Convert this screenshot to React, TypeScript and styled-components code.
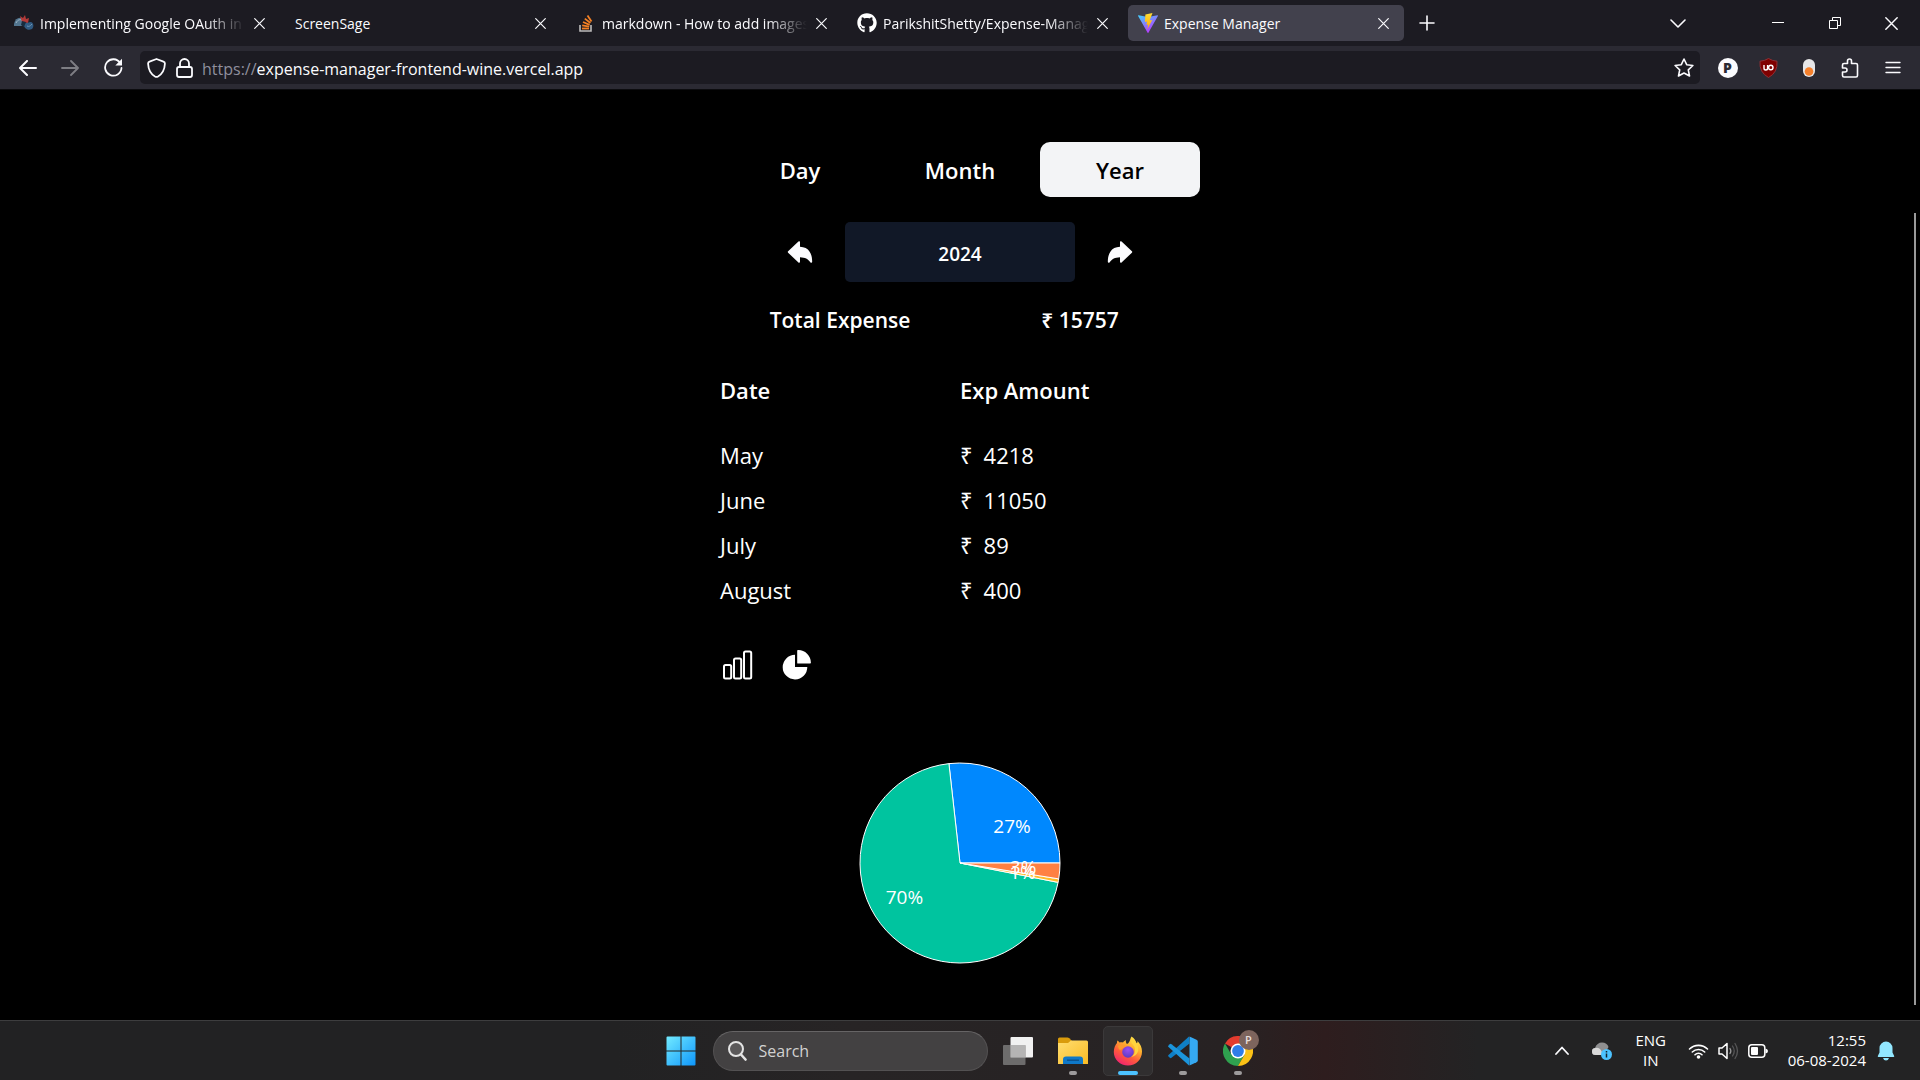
import React from "react";
import styled, { createGlobalStyle } from "styled-components";
import { IoArrowUndo, IoArrowRedo } from "react-icons/io5";
import { FaGithub } from "react-icons/fa";

const GlobalStyle = createGlobalStyle`
  *, *::before, *::after { box-sizing: border-box; }
  body { margin: 0; background: #000; }
  body, button, input { font-family: "Open Sans", "Noto Sans", sans-serif; }
  button { border: 0; padding: 0; background: none; color: inherit; cursor: pointer; }
  svg { display: block; flex: none; }
`;

const Desktop = styled.div`
  display: flex;
  flex-direction: column;
  min-height: 100vh;
  color: #fff;
`;

/* ---------- Browser chrome ---------- */

const TabStrip = styled.div`
  display: flex;
  align-items: center;
  height: 46px;
  padding-left: 4px;
  background: #1c1b22;
`;

const Tab = styled.div<{ $active?: boolean }>`
  display: flex;
  align-items: center;
  gap: 6px;
  flex: 0 1 276px;
  min-width: 0;
  height: 36px;
  margin-right: 5px;
  padding: 0 13px 0 10px;
  border-radius: 5px;
  background: ${(p) => (p.$active ? "#42414d" : "transparent")};
`;

const TabLabel = styled.span<{ $fade?: boolean }>`
  flex: 1;
  min-width: 0;
  overflow: hidden;
  padding-top: 2px;
  white-space: nowrap;
  font-size: 14px;
  line-height: 20px;
  color: #fbfbfe;
  mask-image: ${(p) =>
    p.$fade ? "linear-gradient(to left, transparent, #000 40px)" : "none"};
`;

const IconButton = styled.button<{ $w?: number; $dim?: boolean }>`
  display: flex;
  align-items: center;
  justify-content: center;
  flex: none;
  width: ${(p) => p.$w ?? 24}px;
  height: 36px;
  color: #fbfbfe;
  opacity: ${(p) => (p.$dim ? 0.4 : 1)};
`;

const WindowControls = styled.div`
  display: flex;
  align-items: center;
  margin-left: auto;
`;

const TabsMenu = styled.div`
  margin-right: 42px;
`;

const Toolbar = styled.div`
  display: flex;
  align-items: center;
  height: 43px;
  padding: 0 6px 0 7px;
  background: #2b2a33;
`;

const NavGroup = styled.div`
  display: flex;
  width: 133px;
`;

const UrlBar = styled.div`
  display: flex;
  align-items: center;
  flex: 1;
  height: 33px;
  padding: 0 4px 0 2px;
  border-radius: 5px;
  background: #1c1b22;
`;

const UrlText = styled.a`
  flex: 1;
  margin-left: 4px;
  padding-top: 2px;
  color: #fbfbfe;
  font-size: 16px;
  line-height: 24px;
  text-decoration: none;
  span { color: #8f8f9d; }
`;

const Extensions = styled.div`
  display: flex;
  margin-left: 7px;
`;

const ProfileBadge = styled.span`
  display: grid;
  place-items: center;
  width: 20px;
  height: 20px;
  border-radius: 50%;
  background: #fbfbfe;
  color: #2b2a33;
  font-size: 14px;
  font-weight: 800;
  line-height: 20px;
`;

/* ---------- Expense page ---------- */

const Page = styled.main`
  position: relative;
  flex: 1;
  border-top: 1px solid #0c0c0f;
  padding: 52px 16px 0;
  background: #000;
`;

const ScrollThumb = styled.div`
  position: absolute;
  top: 123px;
  right: 4px;
  bottom: 15px;
  width: 2px;
  background: #9a9a9a;
`;

const Content = styled.div`
  max-width: 480px;
  margin: 0 auto;
`;

const PeriodTabs = styled.div`
  display: grid;
  grid-template-columns: repeat(3, 1fr);
`;

const PeriodButton = styled.button<{ $selected?: boolean }>`
  height: 55px;
  border-radius: 10px;
  background: ${(p) => (p.$selected ? "#f3f4f6" : "transparent")};
  color: ${(p) => (p.$selected ? "#000" : "#fff")};
  font-size: 22px;
  font-weight: 600;
  line-height: 32px;
`;

const YearPicker = styled.div`
  display: flex;
  align-items: center;
  justify-content: center;
  gap: 20px;
  margin-top: 25px;
`;

const YearValue = styled.div`
  width: 230px;
  padding: 18px 0 14px;
  border-radius: 5px;
  background: #111827;
  font-size: 19px;
  font-weight: 600;
  line-height: 28px;
  text-align: center;
`;

const TotalRow = styled.div`
  display: grid;
  grid-template-columns: 1fr 1fr;
  margin-top: 22px;
  font-size: 21px;
  font-weight: 600;
  line-height: 32px;
  text-align: center;
`;

const ExpenseTable = styled.table`
  width: 100%;
  margin-top: 31px;
  border-collapse: collapse;
  table-layout: fixed;
  font-size: 22px;
  text-align: left;
  th {
    height: 65px;
    padding: 7px 0 26px;
    font-weight: 600;
    line-height: 32px;
  }
  td {
    height: 45px;
    padding: 0;
    line-height: 32px;
  }
`;

const Amount = styled.span`
  display: inline-flex;
  gap: 11px;
`;

const ChartSwitch = styled.div`
  display: flex;
  gap: 27px;
  margin-top: 35px;
`;

const ChartArea = styled.div`
  display: flex;
  justify-content: center;
  margin: 79px 0 35px;
`;

const SliceLabel = styled.text`
  fill: #fff;
  font-family: "Open Sans", "Noto Sans", sans-serif;
  font-size: 19px;
`;

/* ---------- Taskbar ---------- */

const Taskbar = styled.footer`
  display: grid;
  grid-template-columns: 1fr auto 1fr;
  align-items: center;
  height: 60px;
  border-top: 1px solid #3d3d3e;
  background: linear-gradient(90deg, #222223 0%, #222223 32%, #272425 44%, #272223 64%, #2e1d1e 69%, #232324 77%, #232324 100%);
`;

const Apps = styled.div`
  grid-column: 2;
  display: flex;
  align-items: center;
  gap: 5px;
  padding-right: 2px;
`;

const AppButton = styled.button<{ $active?: boolean }>`
  position: relative;
  display: grid;
  place-items: center;
  width: 50px;
  height: 50px;
  border: 1px solid ${(p) => (p.$active ? "#3b393a" : "transparent")};
  border-radius: 5px;
  background: ${(p) => (p.$active ? "#302e2f" : "transparent")};
`;

const RunningMark = styled.span<{ $active?: boolean }>`
  position: absolute;
  bottom: 0;
  left: 50%;
  width: ${(p) => (p.$active ? 20 : 8)}px;
  height: 4px;
  margin-left: ${(p) => (p.$active ? -10 : -4)}px;
  border-radius: 2px;
  background: ${(p) => (p.$active ? "#4cc2ff" : "#9d9b9c")};
`;

const UserBadge = styled.span`
  position: absolute;
  top: 3px;
  right: 3px;
  width: 20px;
  height: 20px;
  border-radius: 50%;
  background: #7d645d;
  color: #e8dedb;
  font-size: 11px;
  font-weight: 600;
  line-height: 20px;
`;

const SearchBox = styled.label`
  display: flex;
  align-items: center;
  gap: 12px;
  width: 275px;
  height: 40px;
  margin-left: 2px;
  padding: 0 14px;
  border: 1px solid #535152;
  border-top-color: #666465;
  border-radius: 20px;
  background: #434142;
`;

const SearchInput = styled.input`
  flex: 1;
  min-width: 0;
  border: 0;
  padding: 0;
  outline: 0;
  background: none;
  color: #d2d1d1;
  font-size: 16px;
  line-height: 24px;
  &::placeholder { color: #d2d1d1; opacity: 1; }
`;

const Tray = styled.div`
  display: flex;
  align-items: center;
  justify-content: flex-end;
  padding-right: 25px;
  font-size: 15px;
  line-height: 20px;
`;

const Language = styled.div`
  width: 50px;
  margin: 0 12px 0 4px;
  padding-bottom: 2px;
  text-align: center;
`;

const StatusIcons = styled.div`
  display: flex;
  align-items: center;
  gap: 9px;
  margin-right: 20px;
`;

const Clock = styled.time`
  margin-right: 11px;
  padding-bottom: 2px;
  text-align: right;
`;

const stroke = {
  fill: "none",
  stroke: "currentColor",
  strokeWidth: 1.6,
  strokeLinecap: "round" as const,
  strokeLinejoin: "round" as const,
};

const CloseIcon = ({ size = 11 }: { size?: number }) => (
  <svg width={size} height={size} viewBox="0 0 11 11">
    <path d="M.7.7l9.6 9.6M10.3.7L.7 10.3" {...stroke} strokeWidth={1.2} />
  </svg>
);

const DocsIcon = () => (
  <svg width="20" height="20" viewBox="0 0 20 20">
    <path d="M0 11c1-5 4-7 8-6l3 4-3 4-8 0z" fill="#52758f" />
    <path d="M2 10c2-4 5-4 7-2" stroke="#a3bac8" fill="none" />
    <path d="M6 3l3 2 2-3 1 4 3-1-1 5-6-1z" fill="#b33a38" />
    <path d="M9 10c3 1 5-1 8-1 3 1 3 5 1 7-4 2-8 0-9-6z" fill="#315b82" />
    <path d="M8 8l4 1-2 5-3-2z" fill="#182c3f" />
    <path d="M13 13c2 1 3 0 5-2" stroke="#7096b5" fill="none" />
  </svg>
);

const StackIcon = () => (
  <svg width="20" height="20" viewBox="0 0 20 20">
    <path d="M4 12v6h11v-6" fill="none" stroke="#bcbbbb" strokeWidth="1.6" />
    <g stroke="#f48024" strokeWidth="1.8">
      <path d="M6 15.5h7" />
      <path d="M6.2 12.3l7 1.3" />
      <path d="M7 9l6.6 2.9" />
      <path d="M8.8 5.6l5.6 4.4" />
      <path d="M11.5 2.5l4 6" />
    </g>
  </svg>
);

const ViteIcon = () => (
  <svg width="20" height="20" viewBox="0 0 20 20">
    <defs>
      <linearGradient id="viteBody" x1="0" y1="0" x2=".6" y2="1">
        <stop offset="0" stopColor="#41d1ff" />
        <stop offset="1" stopColor="#bd34fe" />
      </linearGradient>
      <linearGradient id="viteBolt" x1="0" y1="0" x2="0" y2="1">
        <stop offset="0" stopColor="#ffdd35" />
        <stop offset="1" stopColor="#ffa800" />
      </linearGradient>
    </defs>
    <path d="M.4 2.3L10 4l9.6-1.7q.5 0 .3.7L10.4 19.7q-.4.5-.8 0L.1 3q-.2-.6.3-.7z" fill="url(#viteBody)" />
    <path d="M14.5 0L7.4 1.4 6.9 9l2.2-.4-.7 3.3 1.8-.5-1 5 5-9.3-2.6.5z" fill="url(#viteBolt)" />
  </svg>
);

const FolderIcon = () => (
  <svg width="30" height="28" viewBox="0 0 30 28">
    <defs>
      <linearGradient id="folderFront" x1="0" y1="0" x2="1" y2="1">
        <stop offset="0" stopColor="#ffdd70" />
        <stop offset="1" stopColor="#f9bb24" />
      </linearGradient>
    </defs>
    <path d="M0 2q0-1.5 1.5-1.5H9.5q1 0 1.8.8L14 4v7H0z" fill="#d99b0c" />
    <path d="M0 6h10l3-2.500h15.500Q30 3.500 30 5v22H0z" fill="url(#folderFront)" />
    <path d="M5 27v-4.5q0-3 3-3h14q3 0 3 3V27z" fill="#0f78c8" />
    <path d="M9 23.2h12" stroke="#0a4d87" strokeWidth="1.3" />
  </svg>
);

const FirefoxIcon = () => (
  <svg width="30" height="30" viewBox="0 0 30 30">
    <defs>
      <linearGradient id="ffBody" x1=".8" y1="0" x2=".25" y2="1">
        <stop offset="0" stopColor="#fff04d" />
        <stop offset=".35" stopColor="#ffb02e" />
        <stop offset=".65" stopColor="#ff5a3c" />
        <stop offset="1" stopColor="#ee1f74" />
      </linearGradient>
      <radialGradient id="ffCore" cx=".5" cy=".3" r=".7">
        <stop offset="0" stopColor="#9b4df0" />
        <stop offset="1" stopColor="#5e3bc0" />
      </radialGradient>
    </defs>
    <path d="M18.5.5c3 2 4.500 4.500 5 7 1-.5 1-1.500 1-2.500 3 3 4.500 7 4.500 10.500C29 23.500 23 29.500 15 29.500S.800 23.500.800 16C.800 11.500 2.500 9 4 7c0-1 0-1.500.5-2.500C5.500 5 6 6 6.500 6.500 8 6 9 6 10 6.500 11 5 12 4.500 13 4c-.5 1.500 0 3 1 4 2-.5 3-3.500 4.500-7.500z" fill="url(#ffBody)" />
    <circle cx="15" cy="16" r="5.8" fill="url(#ffCore)" />
    <path d="M5 10c3-2 6-2 8 1-2 0-3 .5-4.500 2.500-1.500 1-3 0-3.500-3.500z" fill="#ff9b2c" />
    <path d="M18 1c-1 5 1 6 3 9 2 4 1 9-3 11 7-1 9-8 6-13-1-3-4-4-6-7z" fill="#ffd43d" />
  </svg>
);

const CodeIcon = () => (
  <svg width="30" height="30" viewBox="0 0 30 30">
    <path d="M21.500 7.500L3.500 21.800q-.9.7-1.7 0L.5 20.600q-.8-.8 0-1.600L21 .6z" fill="#0f7fc6" />
    <path d="M21.500 22.500L3.500 8.200q-.9-.7-1.700 0L.5 9.400q-.8.8 0 1.600L21 29.400z" fill="#1b95dc" />
    <path d="M21.500.5l7 3.200q1.300.6 1.300 2v18.600q0 1.400-1.300 2l-7 3.200z" fill="#35a9f2" />
  </svg>
);

const ChromeIcon = () => (
  <svg width="30" height="30" viewBox="0 0 30 30">
    <path d="M15 15L2 7.500A15 15 0 0128 7.500H15z" fill="#e33b2e" />
    <path d="M2 7.500A15 15 0 0015 30l6.500-11.300L8.500 18.700z" fill="#2fa14f" />
    <path d="M28 7.500H15l6.500 11.200L15 30A15 15 0 0028 7.500z" fill="#fbc116" />
    <circle cx="15" cy="15" r="7.5" fill="#fff" />
    <circle cx="15" cy="15" r="5.9" fill="#2f7de9" />
  </svg>
);

const StartIcon = () => (
  <svg width="30" height="30" viewBox="0 0 30 30">
    <defs>
      <linearGradient id="winTile" x1="0" y1="0" x2="30" y2="30" gradientUnits="userSpaceOnUse">
        <stop offset="0" stopColor="#74ecff" />
        <stop offset="1" stopColor="#0c94fb" />
      </linearGradient>
    </defs>
    <path d="M1.500.5H14.500V14.500H.5V1.500q0-1 1-1zM15.500.5H28.500q1 0 1 1V14.500H15.500zM.5 15.500H14.500V29.500H1.500q-1 0-1-1zM15.500 15.500H29.500V28.500q0 1-1 1H15.500z" fill="url(#winTile)" />
  </svg>
);

const TaskViewIcon = () => (
  <svg width="30" height="28" viewBox="0 0 30 28">
    <rect x="7.5" y="0" width="22.5" height="20.5" rx="1" fill="#f1f1f1" />
    <rect x="0" y="8" width="22.5" height="20" rx="1" fill="#7a7979" opacity=".85" />
    <rect x="7.5" y="8" width="15" height="12.5" fill="#b5b4b4" />
  </svg>
);

const BarsIcon = () => (
  <svg width="34" height="30" viewBox="0 0 34 30">
    <g fill="none" stroke="#fff" strokeWidth="2">
      <rect x="4" y="15" width="7.2" height="13.6" rx="1.5" />
      <rect x="14" y="8.5" width="7.2" height="20.1" rx="1.5" />
      <rect x="24" y="1.5" width="7.2" height="27.1" rx="1.5" />
    </g>
  </svg>
);

const PieIcon = () => (
  <svg width="34" height="30" viewBox="0 0 34 30">
    <path d="M14 4.800V17h12.300A12.300 12.300 0 1114 4.800z" fill="#fff" />
    <path d="M16.200.7q0-.7.7-.7A12.800 12.800 0 0129.900 12.800q0 .8-.8.8H16.900q-.7 0-.7-.7z" fill="#fff" />
  </svg>
);

const expenses = [
  { month: "May", amount: 4218, color: "#0088FE" },
  { month: "June", amount: 11050, color: "#00C49F" },
  { month: "July", amount: 89, color: "#FFBB28" },
  { month: "August", amount: 400, color: "#FF8042" },
];
const total = expenses.reduce((sum, e) => sum + e.amount, 0);

const PieChart = () => {
  const c = 101;
  const r = 100;
  const point = (angle: number, radius: number) => [
    c + radius * Math.cos(angle),
    c - radius * Math.sin(angle),
  ];
  let start = 0;
  const slices = expenses.map((e) => {
    const end = start + (e.amount / total) * Math.PI * 2;
    const slice = { ...e, start, end, mid: (start + end) / 2 };
    start = end;
    return slice;
  });
  return (
    <svg width="202" height="202" viewBox="0 0 202 202" role="img" aria-label="Expenses by month">
      {slices.map((s) => {
        const [x1, y1] = point(s.start, r);
        const [x2, y2] = point(s.end, r);
        const large = s.end - s.start > Math.PI ? 1 : 0;
        return (
          <path
            key={s.month}
            d={`M${c} ${c}L${x1} ${y1}A${r} ${r} 0 ${large} 0 ${x2} ${y2}Z`}
            fill={s.color}
            stroke="#fff"
          />
        );
      })}
      {slices.map((s) => {
        const [x, y] = point(s.mid, r / 2);
        return (
          <SliceLabel
            key={s.month}
            x={x}
            y={y}
            textAnchor={x > c ? "start" : "end"}
            dominantBaseline="central"
          >
            {`${((s.amount / total) * 100).toFixed(0)}%`}
          </SliceLabel>
        );
      })}
    </svg>
  );
};

const tabs = [
  { label: "Implementing Google OAuth in Node", icon: <DocsIcon />, fade: true },
  { label: "ScreenSage", icon: null, fade: false },
  { label: "markdown - How to add images to", icon: <StackIcon />, fade: true },
  { label: "ParikshitShetty/Expense-Manager", icon: <FaGithub size={20} />, fade: true },
  { label: "Expense Manager", icon: <ViteIcon />, fade: false },
];

export default function App() {
  return (
    <Desktop>
      <GlobalStyle />
      <TabStrip>
        {tabs.map((tab, i) => (
          <Tab key={tab.label} $active={i === tabs.length - 1}>
            {tab.icon}
            <TabLabel $fade={tab.fade}>{tab.label}</TabLabel>
            <IconButton $w={16} aria-label={`Close ${tab.label}`}>
              <CloseIcon />
            </IconButton>
          </Tab>
        ))}
        <IconButton $w={36} aria-label="New tab">
          <svg width="16" height="16" viewBox="0 0 16 16"><path d="M8 1v14M1 8h14" {...stroke} /></svg>
        </IconButton>
        <WindowControls>
          <TabsMenu>
            <IconButton $w={58} aria-label="List all tabs">
              <svg width="16" height="9" viewBox="0 0 16 9"><path d="M1 1l7 7 7-7" {...stroke} /></svg>
            </IconButton>
          </TabsMenu>
          <IconButton $w={57} aria-label="Minimize">
            <svg width="12" height="12" viewBox="0 0 12 12"><path d="M0 5.500h12" stroke="#fff" /></svg>
          </IconButton>
          <IconButton $w={57} aria-label="Restore">
            <svg width="12" height="12" viewBox="0 0 12 12"><path d="M.5 3.500h8v8h-8zM3.500 3.500v-3h8v8h-3" fill="none" stroke="#fff" /></svg>
          </IconButton>
          <IconButton $w={57} aria-label="Close window"><CloseIcon size={13} /></IconButton>
        </WindowControls>
      </TabStrip>

      <Toolbar>
        <NavGroup>
          <IconButton $w={42} aria-label="Back">
            <svg width="18" height="16" viewBox="0 0 18 16"><path d="M17 8H1.500M8 1L1 8l7 7" {...stroke} strokeWidth={2} /></svg>
          </IconButton>
          <IconButton $w={42} $dim aria-label="Forward">
            <svg width="18" height="16" viewBox="0 0 18 16"><path d="M1 8h15.500M10 1l7 7-7 7" {...stroke} strokeWidth={1.8} /></svg>
          </IconButton>
          <IconButton $w={44} aria-label="Reload">
            <svg width="19" height="19" viewBox="0 0 19 19">
              <path d="M16.200 5A8.200 8.200 0 1017.500 10" {...stroke} strokeWidth={1.8} />
              <path d="M18 .8v6.700h-6.700z" fill="currentColor" />
            </svg>
          </IconButton>
        </NavGroup>
        <UrlBar>
          <IconButton $w={28} aria-label="Tracking protection">
            <svg width="19" height="20" viewBox="0 0 19 20"><path d="M9.500 1l7 2.700q1.500.5 1.400 2-.4 8.800-6.900 12.800-1.500.8-3 0Q1.500 14.500 1.100 5.700 1 4.200 2.500 3.700z" {...stroke} strokeWidth={1.8} /></svg>
          </IconButton>
          <IconButton $w={28} aria-label="Site information">
            <svg width="17" height="20" viewBox="0 0 17 20"><path d="M4 9V5.500a4.500 4.500 0 019 0V9M3 9h11q2 0 2 2v6q0 2-2 2H3q-2 0-2-2v-6q0-2 2-2z" {...stroke} strokeWidth={1.8} /></svg>
          </IconButton>
          <UrlText href="#"><span>https://</span>expense-manager-frontend-wine.vercel.app</UrlText>
          <IconButton aria-label="Bookmark this page">
            <svg width="20" height="20" viewBox="0 0 20 20"><path d="M10 1l2.700 5.700 6.200.8-4.600 4.300 1.200 6.200-5.500-3-5.500 3 1.200-6.200L1.100 7.500l6.200-.8z" {...stroke} /></svg>
          </IconButton>
        </UrlBar>
        <Extensions>
          <IconButton $w={41} aria-label="Profile"><ProfileBadge>P</ProfileBadge></IconButton>
          <IconButton $w={41} aria-label="uBlock Origin">
            <svg width="19" height="20" viewBox="0 0 19 20">
              <path d="M9.500.5q4 2.500 8.500 2.700 1 11.300-8.500 16.300Q0 14.500 1 3.200 5.500 3 9.500.5z" fill="#800000" stroke="#8e3035" />
              <path d="M5 7v3.200a1.800 1.800 0 003.600 0V7" fill="none" stroke="#fff" strokeWidth="1.4" />
              <circle cx="11.8" cy="9.5" r="2.2" fill="none" stroke="#fff" strokeWidth="1.4" />
            </svg>
          </IconButton>
          <IconButton $w={40} aria-label="Toggle extension">
            <svg width="12" height="18" viewBox="0 0 12 18">
              <rect width="12" height="18" rx="6" fill="#e6e6e8" />
              <circle cx="6" cy="12.5" r="4.3" fill="#f5802c" />
            </svg>
          </IconButton>
          <IconButton $w={42} aria-label="Extensions">
            <svg width="18" height="20" viewBox="0 0 18 20"><path d="M6.500 5.500V3a2 2 0 014 0v2.500H15q1.500 0 1.500 1.500v10.500Q16.500 19 15 19H3q-1.500 0-1.500-1.500V14H4a2 2 0 000-4H1.500V7q0-1.500 1.500-1.500z" {...stroke} /></svg>
          </IconButton>
          <IconButton $w={43} aria-label="Open menu">
            <svg width="16" height="13" viewBox="0 0 16 13"><path d="M1 1.500h14M1 6.500h14M1 11.500h14" {...stroke} strokeWidth={1.4} /></svg>
          </IconButton>
        </Extensions>
      </Toolbar>

      <Page>
        <Content>
          <PeriodTabs>
            <PeriodButton>Day</PeriodButton>
            <PeriodButton>Month</PeriodButton>
            <PeriodButton $selected>Year</PeriodButton>
          </PeriodTabs>
          <YearPicker>
            <IconButton $w={50} aria-label="Previous year"><IoArrowUndo size={30} /></IconButton>
            <YearValue>2024</YearValue>
            <IconButton $w={50} aria-label="Next year"><IoArrowRedo size={30} /></IconButton>
          </YearPicker>
          <TotalRow>
            <span>Total Expense</span>
            <span>₹ {total}</span>
          </TotalRow>
          <ExpenseTable>
            <thead>
              <tr><th>Date</th><th>Exp Amount</th></tr>
            </thead>
            <tbody>
              {expenses.map((e) => (
                <tr key={e.month}>
                  <td>{e.month}</td>
                  <td><Amount><span>₹</span><span>{e.amount}</span></Amount></td>
                </tr>
              ))}
            </tbody>
          </ExpenseTable>
          <ChartSwitch>
            <IconButton $w={34} aria-label="Bar chart"><BarsIcon /></IconButton>
            <IconButton $w={34} aria-label="Pie chart"><PieIcon /></IconButton>
          </ChartSwitch>
          <ChartArea><PieChart /></ChartArea>
        </Content>
        <ScrollThumb />
      </Page>

      <Taskbar>
        <Apps>
          <AppButton aria-label="Start"><StartIcon /></AppButton>
          <SearchBox>
            <svg width="19" height="20" viewBox="0 0 19 20">
              <circle cx="8" cy="8" r="7" fill="#5b595a" stroke="#e4e4e4" strokeWidth="2" />
              <path d="M13 13.500l4.500 5" stroke="#e4e4e4" strokeWidth="2.6" strokeLinecap="round" />
            </svg>
            <SearchInput type="text" placeholder="Search" aria-label="Search" />
          </SearchBox>
          <AppButton aria-label="Task view"><TaskViewIcon /></AppButton>
          <AppButton aria-label="File Explorer"><FolderIcon /><RunningMark /></AppButton>
          <AppButton $active aria-label="Firefox"><FirefoxIcon /><RunningMark $active /></AppButton>
          <AppButton aria-label="Visual Studio Code"><CodeIcon /><RunningMark /></AppButton>
          <AppButton aria-label="Chrome"><ChromeIcon /><UserBadge>P</UserBadge><RunningMark /></AppButton>
        </Apps>
        <Tray>
          <IconButton $w={40} aria-label="Show hidden icons">
            <svg width="14" height="9" viewBox="0 0 14 9"><path d="M1 8l6-6.500L13 8" {...stroke} strokeWidth={1.8} /></svg>
          </IconButton>
          <IconButton $w={40} aria-label="OneDrive">
            <svg width="20" height="18" viewBox="0 0 20 18">
              <path d="M3.500 13a3.500 3.500 0 01-.5-7Q5 .5 10 .5q5 0 6.500 4.500L12 13z" fill="#8f8f90" />
              <path d="M3.500 13a3.500 3.500 0 010-7q3-1 5 1.500l3 5.500z" fill="#d9d9d9" />
              <circle cx="14.5" cy="12.5" r="5.5" fill="#4cc2ff" />
              <path d="M14.500 11.500v4M14.500 9v1.500" stroke="#12242e" strokeWidth="1.5" />
            </svg>
          </IconButton>
          <Language>ENG<br />IN</Language>
          <StatusIcons>
            <svg width="21" height="16" viewBox="0 0 21 16">
              <path d="M1.500 6a13 13 0 0118 0M4.300 9a9 9 0 0112.400 0M7 11.800a5 5 0 017 0" {...stroke} />
              <circle cx="10.5" cy="14" r="1.8" fill="#fff" />
            </svg>
            <svg width="21" height="18" viewBox="0 0 21 18">
              <path d="M1 6h3l5-4.500v15L4 12H1z" {...stroke} strokeWidth={1.5} />
              <path d="M12 6.500q1.700 2.500 0 5" {...stroke} stroke="#9a9a9a" strokeWidth={1.3} />
              <path d="M14.500 4q3.500 5 0 10M17 1.500q5 7.500 0 15" {...stroke} stroke="#565657" strokeWidth={1.3} />
            </svg>
            <svg width="20" height="14" viewBox="0 0 20 14">
              <rect x=".8" y=".8" width="16" height="12.4" rx="3" fill="none" stroke="#fff" strokeWidth="1.5" />
              <rect x="3" y="3" width="7" height="8" rx="1" fill="#fff" />
              <path d="M17.500 4.500q2.500.5 2.500 2.500t-2.500 2.500z" fill="#fff" />
            </svg>
          </StatusIcons>
          <Clock>12:55<br />06-08-2024</Clock>
          <svg width="18" height="20" viewBox="0 0 18 20" aria-label="Notifications">
            <path d="M9 .5a6.500 6.500 0 016.500 6.500v4.500l1.700 3.500q.3 1-.7 1h-15q-1 0-.7-1l1.700-3.500V7A6.500 6.500 0 019 .5zM6 17h6q-.8 2.500-3 2.500T6 17z" fill="#92e7ff" />
          </svg>
        </Tray>
      </Taskbar>
    </Desktop>
  );
}
